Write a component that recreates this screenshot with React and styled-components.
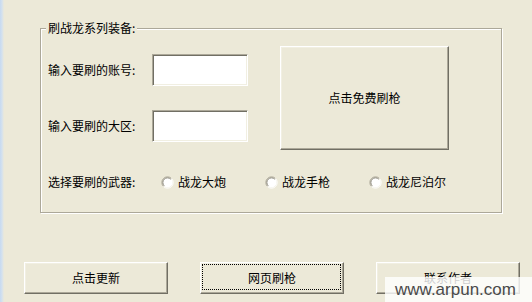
import React from "react";
import styled, { createGlobalStyle } from "styled-components";

const Global = createGlobalStyle`
  html, body { margin: 0; padding: 0; background: #ECE9D8; }
  body {
    font-family: "Noto Sans CJK SC", "Noto Sans", sans-serif;
    font-size: 12px;
    color: #000;
  }
  #root { width: 532px; height: 302px; overflow: hidden; }
`;

const Window = styled.div`
  position: relative;
  width: 532px;
  height: 302px;
  box-sizing: border-box;
  padding-top: 28px;
  background: linear-gradient(to right, #c6daf1 0, #d4e1ee 2px, #ECE9D8 4px);
  display: flex;
  flex-direction: column;
`;

const GroupBox = styled.section`
  position: relative;
  box-sizing: border-box;
  margin-left: 40px;
  width: 462px;
  height: 185px;
  border: 1px solid #ACA899;
  box-shadow: inset 1px 1px 0 #fff, 1px 1px 0 #fff;
  padding: 17px 0 0 7px;
`;

const Legend = styled.div`
  position: absolute;
  top: -9px;
  left: 5px;
  padding: 0 2px;
  line-height: 16px;
  background: #ECE9D8;
`;

const TopArea = styled.div`
  display: flex;
  align-items: flex-start;
`;

const LeftCol = styled.div`
  display: flex;
  flex-direction: column;
  gap: 24px;
  padding-top: 8px;
`;

const Field = styled.div`
  display: flex;
  align-items: center;
  height: 32px;
`;

const Label = styled.span`
  width: ${(p) => p.$w}px;
  flex: none;
  line-height: 16px;
  white-space: nowrap;
`;

const TextBox = styled.input`
  box-sizing: border-box;
  width: 96px;
  height: 32px;
  margin: 0;
  padding: 2px 4px;
  background: #fff;
  border: 1px solid;
  border-color: #ACA899 #fff #fff #ACA899;
  box-shadow: inset 1px 1px 0 #716F64, inset -1px -1px 0 #F1EFE2;
  font: inherit;
  outline: none;
`;

const Button = styled.button`
  position: relative;
  box-sizing: border-box;
  width: ${(p) => p.$w}px;
  height: ${(p) => p.$h}px;
  margin: 0;
  padding: 0;
  flex: none;
  background: #ECE9D8;
  border: 1px solid;
  border-color: #fff #716F64 #716F64 #fff;
  box-shadow: inset -1px -1px 0 #ACA899, inset 1px 1px 0 #F1EFE2;
  font-family: inherit;
  font-size: 12px;
  color: #000;
  line-height: 16px;
  ${(p) =>
    p.$focus &&
    `
    &::after {
      content: "";
      position: absolute;
      left: 1px; top: 1px; right: 2px; bottom: 3px;
      border: 1px dotted #000;
    }
  `}
`;

const BigButton = styled(Button)`
  margin-left: 32px;
`;

const RadioRow = styled.div`
  display: flex;
  align-items: center;
  height: 16px;
  margin-top: 24px;
`;

const RadioOption = styled.label`
  display: flex;
  align-items: center;
  gap: 4px;
  width: 104px;
  flex: none;
  line-height: 16px;
`;

const ButtonRow = styled.div`
  display: flex;
  gap: 32px;
  margin-top: 49px;
  padding-left: 24px;
`;

const Watermark = styled.div`
  position: absolute;
  right: 0;
  bottom: 0;
  width: 147px;
  height: 25px;
  background: rgba(255, 255, 255, 0.8);
  color: #4a4a4a;
  font-family: "Liberation Sans", Arial, sans-serif;
  font-size: 17px;
  line-height: 25px;
  box-sizing: border-box;
  padding-left: 10px;
  white-space: nowrap;
`;

const RadioDot = () => (
  <svg width="13" height="13" viewBox="0 0 13 13">
    <circle cx="6.5" cy="6.5" r="5" fill="#fff" />
    <path d="M10.5 2.5 A5.6 5.6 0 0 0 2.5 10.5" fill="none" stroke="#ACA899" strokeWidth="1" />
    <path d="M9.8 3.2 A4.6 4.6 0 0 0 3.2 9.8" fill="none" stroke="#8a877a" strokeWidth="1" />
    <path d="M10.5 2.5 A5.6 5.6 0 0 1 2.5 10.5" fill="none" stroke="#fff" strokeWidth="1" />
  </svg>
);

const weapons = ["战龙大炮", "战龙手枪", "战龙尼泊尔"];

export default function App() {
  return (
    <>
      <Global />
      <Window>
        <GroupBox>
          <Legend>刷战龙系列装备:</Legend>
          <TopArea>
            <LeftCol>
              <Field>
                <Label $w={104}>输入要刷的账号:</Label>
                <TextBox />
              </Field>
              <Field>
                <Label $w={104}>输入要刷的大区:</Label>
                <TextBox />
              </Field>
            </LeftCol>
            <BigButton $w={169} $h={104}>点击免费刷枪</BigButton>
          </TopArea>
          <RadioRow>
            <Label $w={113}>选择要刷的武器:</Label>
            {weapons.map((w) => (
              <RadioOption key={w}>
                <RadioDot />
                <span>{w}</span>
              </RadioOption>
            ))}
          </RadioRow>
        </GroupBox>
        <ButtonRow>
          <Button $w={144} $h={32}>点击更新</Button>
          <Button $w={144} $h={32} $focus>网页刷枪</Button>
          <Button $w={144} $h={32}>联系作者</Button>
        </ButtonRow>
        <Watermark>www.arpun.com</Watermark>
      </Window>
    </>
  );
}
